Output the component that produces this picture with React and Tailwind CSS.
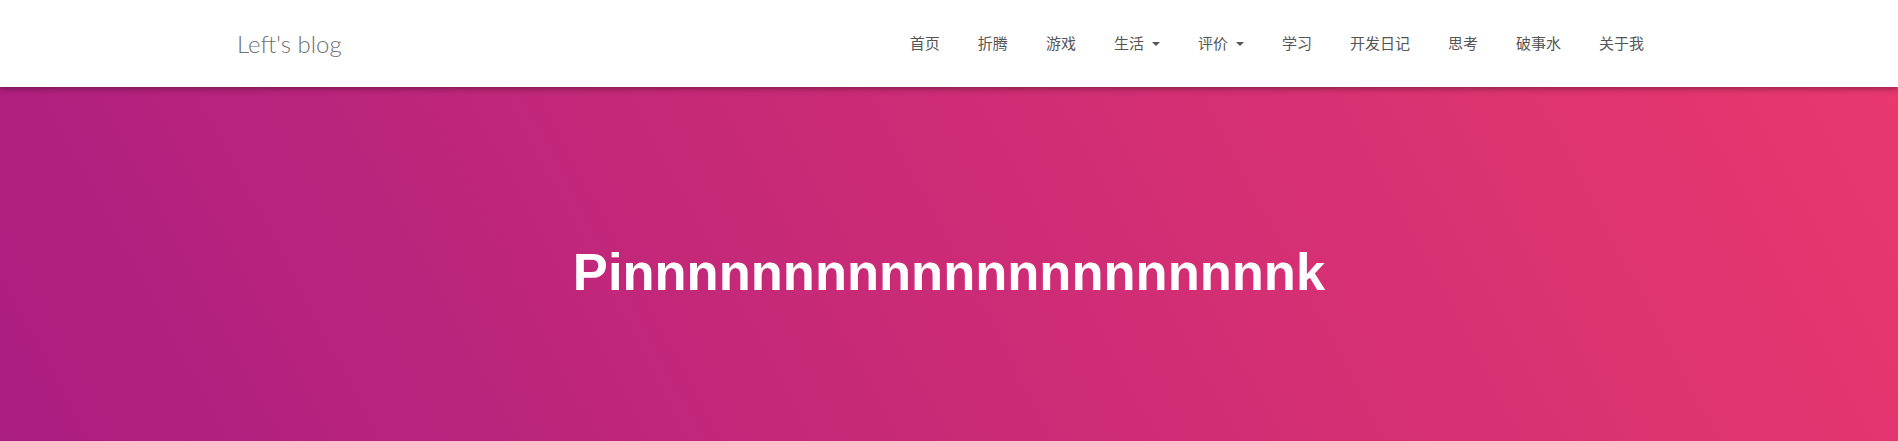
const navItems = [
  { label: '首页' },
  { label: '折腾' },
  { label: '游戏' },
  { label: '生活', dropdown: true },
  { label: '评价', dropdown: true },
  { label: '学习' },
  { label: '开发日记' },
  { label: '思考' },
  { label: '破事水' },
  { label: '关于我' },
];

const App = () => {
  return (
    <div className="min-h-screen bg-white">
      {/* Navbar */}
      <nav className="relative z-10 h-[87px] bg-white shadow-[0_2px_6px_rgba(0,0,0,0.35)]">
        <div className="mx-auto flex h-full w-[1428px] items-center justify-between">
          <a
            href="#"
            className="pl-[2px] font-['Lato','Open_Sans',sans-serif] text-[24px] font-light text-[#707070]"
          >
            Left's blog
          </a>
          <ul className="flex items-center">
            {navItems.map((item) => (
              <li key={item.label}>
                <a
                  href="#"
                  className="flex items-center px-[19px] font-['Noto_Sans_CJK_SC',sans-serif] text-[15px] text-[#555]"
                >
                  {item.label}
                  {item.dropdown && (
                    <span className="ml-2 inline-block h-0 w-0 border-x-[4.5px] border-t-[4.5px] border-x-transparent border-t-[#555]"></span>
                  )}
                </a>
              </li>
            ))}
          </ul>
        </div>
      </nav>

      {/* Hero */}
      <header className="h-[400px] bg-[linear-gradient(62deg,#aa1d82_0%,#c82a77_45%,#e8386e_100%)] pt-[156px]">
        <h1 className="text-center font-['Liberation_Sans',Arial,sans-serif] text-[52.5px] font-bold leading-[1.1] text-white">
          Pinnnnnnnnnnnnnnnnnnnnnk
        </h1>
      </header>
    </div>
  );
};

export default App;
